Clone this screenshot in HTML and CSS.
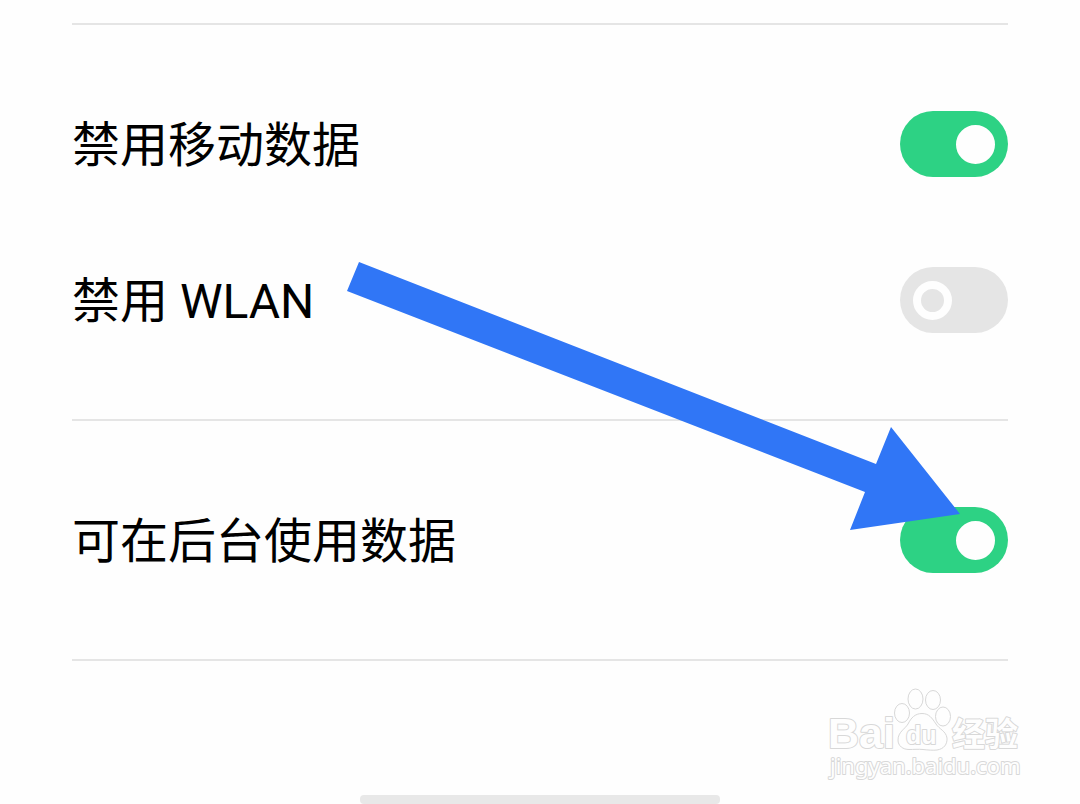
FILE: index.html
```html
<!DOCTYPE html>
<html lang="zh-CN">
<head>
    <meta charset="UTF-8">
    <meta name="viewport" content="width=device-width, initial-scale=1.0">
    <title>流量使用</title>
    <link rel="stylesheet" href="styles.css">
</head>
<body>
    <main class="settings">
        <section class="group">
            <div class="row">
                <label for="mobile-data">禁用移动数据</label>
                <input class="switch" type="checkbox" id="mobile-data" checked>
            </div>
            <div class="row">
                <label for="wlan">禁用 WLAN</label>
                <input class="switch" type="checkbox" id="wlan">
            </div>
        </section>
        <section class="group">
            <div class="row">
                <label for="background-data">可在后台使用数据</label>
                <input class="switch" type="checkbox" id="background-data" checked>
            </div>
        </section>

        <!-- arrow pointing at the last switch -->
        <svg class="arrow" width="614" height="270" viewBox="0 0 614 270" aria-hidden="true">
            <path d="M13 1L530 203L545 166L614 253L504 269L519 231L1 30Z"/>
        </svg>
    </main>

    <footer class="footer">
        <svg class="watermark" width="204" height="100" viewBox="0 0 204 100">
            <text class="logo" x="6" y="64">Bai</text>
            <ellipse cx="80" cy="29" rx="7.500" ry="9.500"/>
            <ellipse cx="93.500" cy="15" rx="7.500" ry="10"/>
            <ellipse cx="111" cy="16" rx="7.500" ry="9.500"/>
            <ellipse cx="121" cy="32.500" rx="7.500" ry="9.500"/>
            <path d="M100 29.500C93 29.500 89 34 86 40C83 45 76 48 76 56C76 62 81 65.500 87 65.500C92 65.500 96 65 101 65.500C106 66 111 66.500 115 66C122 65 125.500 60 125 54C124 47 117 45 114 40C110 34 107 29.500 100 29.500Z"/>
            <text class="du" x="84" y="60">du</text>
            <text class="jingyan" x="130" y="62">经验</text>
            <text class="site" x="8" y="90">jingyan.baidu.com</text>
        </svg>
        <div class="home-bar"></div>
    </footer>
</body>
</html>
```
FILE: styles.css
```css
* {
    box-sizing: border-box;
}
body {
    display: flex;
    flex-direction: column;
    min-height: 100vh;
    margin: 0;
    background-color: #fefefe;
    color: #000;
    font-family: Roboto, "Noto Sans CJK SC", sans-serif;
}
.settings {
    position: relative;
    padding: 23px 72px 0;
}
.group {
    padding: 41px 0;
    border-top: 2px solid #e5e5e5;
}
.group:last-of-type {
    border-bottom: 2px solid #e5e5e5;
}
.row {
    display: flex;
    align-items: center;
    justify-content: space-between;
    height: 156px;
    font-size: 48px;
}
.row label {
    padding-bottom: 6px;
}
/* switch */
.switch {
    appearance: none;
    display: flex;
    align-items: center;
    flex: none;
    width: 108px;
    height: 66px;
    margin: 0;
    padding: 0 13px;
    border-radius: 33px;
    background-color: #e5e5e5;
    cursor: pointer;
}
.switch::before {
    content: "";
    box-sizing: border-box;
    width: 39px;
    height: 39px;
    border: 8px solid #fefefe;
    border-radius: 50%;
}
.switch:checked {
    justify-content: flex-end;
    background-color: #2dd284;
}
.switch:checked::before {
    background-color: #fefefe;
}
.arrow {
    position: absolute;
    top: 261px;
    right: 120px;
    fill: #3076f6;
    pointer-events: none;
}
/* bottom */
.footer {
    display: flex;
    flex: 1;
    flex-direction: column;
    justify-content: space-between;
    align-items: center;
    padding-top: 23px;
}
.watermark {
    align-self: flex-end;
    margin-right: 54px;
    fill: #fefefe;
    stroke: #d8d8d8;
    stroke-width: 1px;
    stroke-linejoin: round;
}
.watermark text {
    paint-order: stroke;
    stroke-width: 2px;
}
.logo {
    font: bold 43px "Liberation Sans", sans-serif;
}
.du {
    font: bold 25px "Liberation Sans", sans-serif;
}
.jingyan {
    font: bold 33px "Noto Sans CJK SC", sans-serif;
}
.site {
    font: 22px "Noto Sans", sans-serif;
}
.home-bar {
    width: 360px;
    height: 9px;
    border-radius: 4px;
    background-color: #e8e8e8;
}
```
